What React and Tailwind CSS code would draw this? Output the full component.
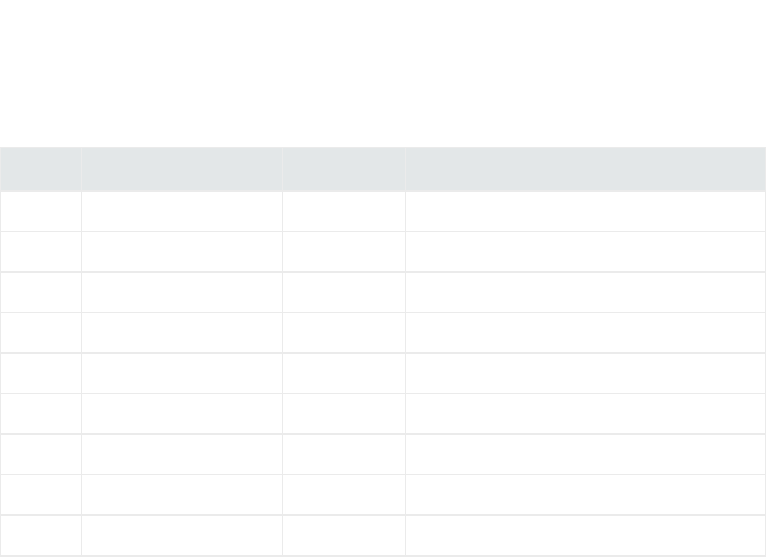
export default function App() {
  const rows = Array.from({ length: 9 }, (_, i) => i);

  return (
    <div className="w-[766px] h-[558px] bg-white pt-[147px] font-['Liberation_Sans',sans-serif] overflow-hidden">
      <div className="w-[766px] border-t border-l border-[#ebebeb]">
        {/* Header */}
        <div className="flex h-[44px] bg-[#e3e7e8] border-b-2 border-[#ebebeb]">
          <div className="w-[81px] border-r border-[#ebebeb]" />
          <div className="w-[201px] border-r border-[#ebebeb]" />
          <div className="w-[123px] border-r border-[#ebebeb]" />
          <div className="w-[360px] border-r border-[#ebebeb]" />
        </div>

        {/* Body rows */}
        {rows.map((i) => (
          <div
            key={i}
            className={
              i % 2 === 1 || i === 8
                ? 'flex h-[41px] border-b-2 border-[#ebebeb]'
                : 'flex h-[40px] border-b border-[#ebebeb]'
            }
          >
            <div className="w-[81px] border-r border-[#ebebeb]" />
            <div className="w-[201px] border-r border-[#ebebeb]" />
            <div className="w-[123px] border-r border-[#ebebeb]" />
            <div className="w-[360px] border-r border-[#ebebeb]" />
          </div>
        ))}
      </div>
    </div>
  );
}
